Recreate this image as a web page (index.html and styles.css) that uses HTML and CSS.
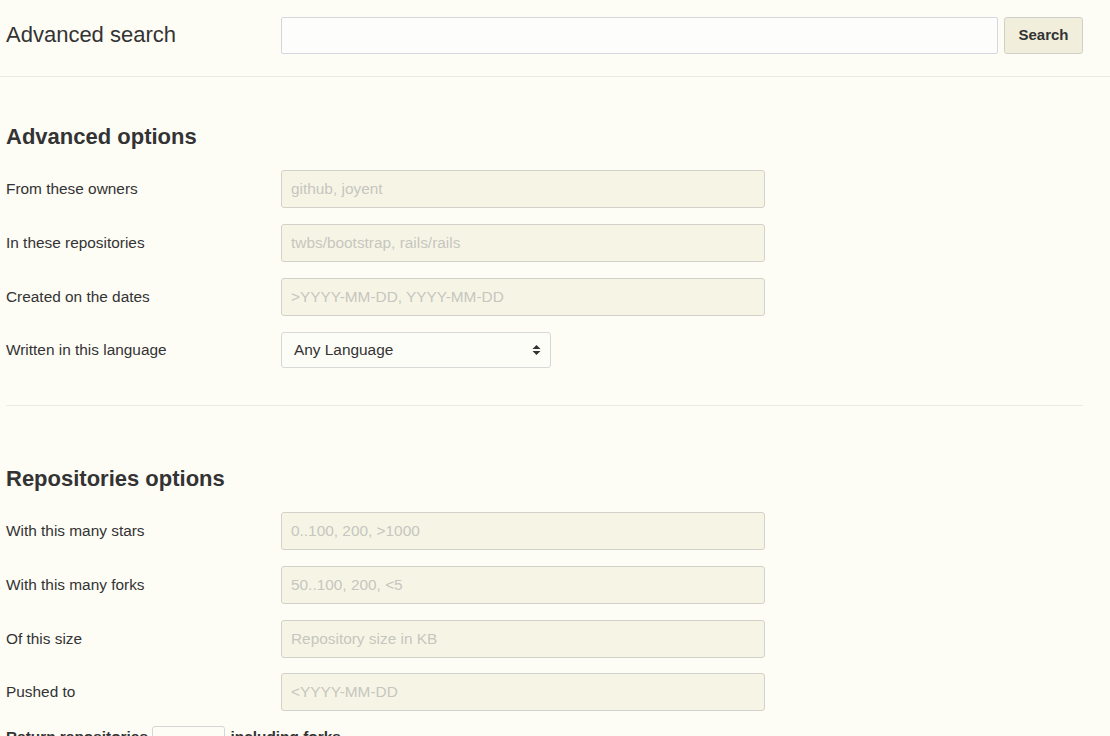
FILE: index.html
```html
<!DOCTYPE html>
<html lang="en">
<head>
<meta charset="utf-8">
<title>Advanced search</title>
<link rel="stylesheet" href="styles.css">
</head>
<body>
<header class="topbar">
  <h1 class="title">Advanced search</h1>
  <form class="searchform">
    <input class="searchbox" type="text" aria-label="Search">
    <button class="btn" type="button">Search</button>
  </form>
</header>
<main class="content">
  <section class="group">
    <h2 class="heading">Advanced options</h2>
    <div class="row"><label class="label">From these owners</label><input class="field" disabled placeholder="github, joyent"></div>
    <div class="row"><label class="label">In these repositories</label><input class="field" disabled placeholder="twbs/bootstrap, rails/rails"></div>
    <div class="row"><label class="label">Created on the dates</label><input class="field" disabled placeholder="&gt;YYYY-MM-DD, YYYY-MM-DD"></div>
    <div class="row"><label class="label">Written in this language</label>
      <div class="select">
        <span>Any Language</span>
        <svg class="caret" width="9" height="12" viewBox="0 0 9 12"><path d="M4.5 1 L8.5 5 H0.5 Z M4.5 11 L8.5 7 H0.5 Z" fill="#333"/></svg>
      </div>
    </div>
  </section>
  <hr class="rule">
  <section class="group group2">
    <h2 class="heading">Repositories options</h2>
    <div class="row"><label class="label">With this many stars</label><input class="field" disabled placeholder="0..100, 200, &gt;1000"></div>
    <div class="row"><label class="label">With this many forks</label><input class="field" disabled placeholder="50..100, 200, &lt;5"></div>
    <div class="row"><label class="label">Of this size</label><input class="field" disabled placeholder="Repository size in KB"></div>
    <div class="row last"><label class="label">Pushed to</label><input class="field" disabled placeholder="&lt;YYYY-MM-DD"></div>
    <div class="inline-row">Return repositories <span class="mini-select"></span> including forks.</div>
  </section>
</main>
</body>
</html>
```
FILE: styles.css
```css
* { box-sizing: border-box; }
html, body { margin: 0; padding: 0; }
body {
  background: #fdfdf6;
  color: #333;
  font-family: "Liberation Sans", Arial, sans-serif;
  font-size: 15.4px;
  height: 736px;
  overflow: hidden;
}
.topbar {
  display: flex;
  align-items: center;
  padding: 17px 27px 22px 6px;
  border-bottom: 1px solid #ebebe6;
}
.title {
  margin: 0;
  width: 275px;
  font-size: 22px;
  font-weight: normal;
  line-height: 1.1;
}
.searchform {
  flex: 1;
  display: flex;
  gap: 6px;
}
.searchbox {
  flex: 1;
  height: 37px;
  border: 1px solid #d6d6e0;
  border-radius: 2px;
  background: #fdfdfb;
  font: inherit;
}
.btn {
  width: 79px;
  height: 37px;
  border: 1px solid #d0d0c8;
  border-radius: 3px;
  background: #f1efdc;
  font-family: "Liberation Sans", Arial, sans-serif;
  font-size: 15px;
  font-weight: bold;
  color: #333;
  padding: 0 0 2px;
}
.content {
  padding: 0 27px 0 6px;
}
.group { padding-top: 48px; }
.group2 { padding-top: 61px; }
.heading {
  margin: 0 0 21px;
  font-size: 22px;
  font-weight: bold;
  line-height: 1.1;
}
.row {
  display: flex;
  align-items: center;
  height: 38px;
  margin-bottom: 15.67px;
}
.row.last { margin-bottom: 15px; }
.label {
  width: 275px;
  flex: none;
}
.field {
  width: 484px;
  height: 38px;
  border: 1px solid #d2d2cc;
  border-radius: 3px;
  background: #f6f5e5;
  padding: 0 9px;
  font-family: "Liberation Sans", Arial, sans-serif;
  font-size: 15.4px;
}
.field::placeholder { color: #c6c6c0; }
.select {
  width: 270px;
  height: 36px;
  border: 1px solid #d8d8d8;
  border-radius: 3px;
  background: #fdfdf8;
  display: flex;
  align-items: center;
  justify-content: space-between;
  padding: 0 9px 0 12px;
}
.rule {
  margin: 36px 0 0;
  border: 0;
  border-top: 1px solid #ebebe3;
}
.inline-row {
  font-weight: bold;
  display: flex;
  align-items: flex-start;
  white-space: pre;
  line-height: 22px;
  height: 30px;
}
.mini-select {
  display: inline-block;
  width: 73px;
  height: 30px;
  border: 1px solid #d6d6d6;
  border-radius: 3px;
  margin-left: 0;
  margin-right: 1px;
}
```
